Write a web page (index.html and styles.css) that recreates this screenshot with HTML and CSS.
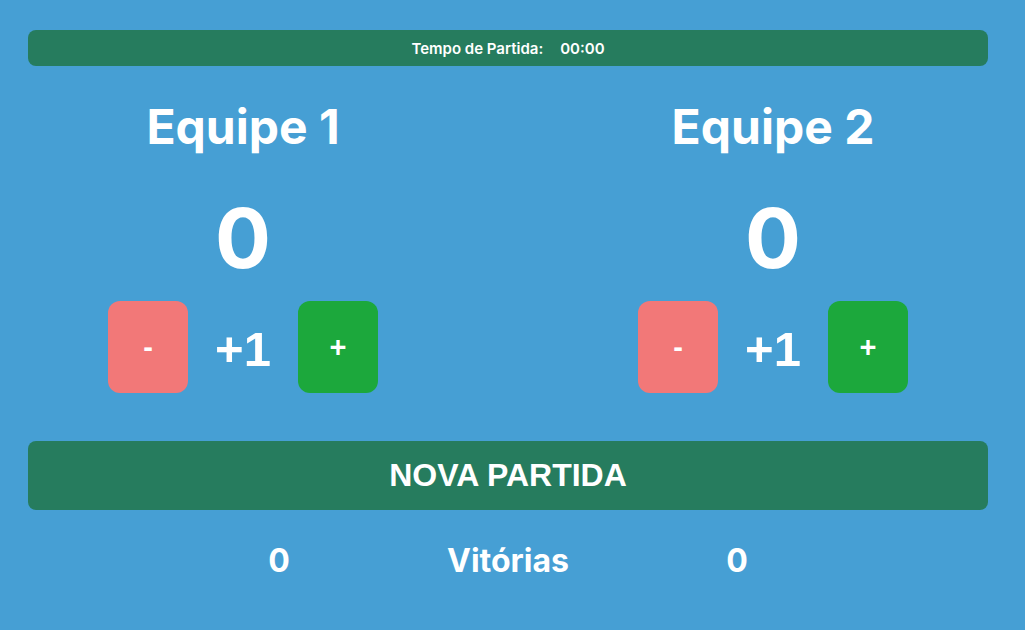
FILE: index.html
```html
<!DOCTYPE html>
<html lang="pt-BR">
<head>
<meta charset="utf-8">
<title>Placar</title>
<link rel="stylesheet" href="styles.css">
</head>
<body>
<main class="app">
  <div class="timer-bar">
    <span class="timer-label">Tempo de Partida:</span>
    <span class="timer-value">00:00</span>
  </div>
  <section class="teams">
    <div class="team">
      <h1 class="team-name">Equipe 1</h1>
      <div class="score">0</div>
      <div class="controls">
        <button class="btn btn-minus">-</button>
        <span class="step">+1</span>
        <button class="btn btn-plus">+</button>
      </div>
    </div>
    <div class="team">
      <h1 class="team-name">Equipe 2</h1>
      <div class="score">0</div>
      <div class="controls">
        <button class="btn btn-minus">-</button>
        <span class="step">+1</span>
        <button class="btn btn-plus">+</button>
      </div>
    </div>
  </section>
  <button class="new-match">NOVA PARTIDA</button>
  <div class="wins">
    <span class="wins-cell">0</span>
    <span class="wins-cell">Vitórias</span>
    <span class="wins-cell">0</span>
  </div>
</main>
</body>
</html>
```
FILE: styles.css
```css
* { box-sizing: border-box; }
html, body {
  margin: 0;
  padding: 0;
  background: #469fd4;
  height: 100%;
}
body {
  font-family: "Inter", "Liberation Sans", sans-serif;
  color: #ffffff;
}
.app {
  width: 960px;
  margin: 0 0 0 28px;
  padding-top: 30px;
  display: flex;
  flex-direction: column;
}
.timer-bar {
  height: 36px;
  background: #267c5e;
  border-radius: 8px;
  display: flex;
  align-items: center;
  justify-content: center;
  gap: 17px;
  font-size: 15px;
  font-weight: 600;
}
.teams {
  display: flex;
  justify-content: space-between;
  padding: 0 80px;
  margin-top: 32px;
}
.team {
  width: 270px;
  display: flex;
  flex-direction: column;
  align-items: center;
}
.team-name {
  margin: 0;
  font-size: 48px;
  line-height: 58px;
  font-weight: 700;
}
.score {
  margin-top: 40px;
  font-size: 83px;
  line-height: 84px;
  font-weight: 700;
}
.controls {
  margin-top: 21px;
  width: 100%;
  display: flex;
  align-items: center;
  justify-content: space-between;
}
.btn {
  width: 80px;
  height: 92px;
  border: none;
  border-radius: 12px;
  color: #ffffff;
  font-family: "Liberation Sans", Arial, sans-serif;
  font-size: 29px;
  font-weight: 700;
  padding: 0;
}
.btn-minus { background: #f27878; }
.btn-plus { background: #1ca83c; }
.step {
  font-family: "Liberation Sans", Arial, sans-serif;
  font-weight: 700;
  font-size: 49px;
  line-height: 1;
  padding-top: 4px;
}
.new-match {
  margin-top: 48px;
  height: 69px;
  border: none;
  border-radius: 8px;
  background: #267c5e;
  color: #ffffff;
  font-family: "Liberation Sans", Arial, sans-serif;
  font-weight: 700;
  font-size: 32px;
  padding: 0;
}
.wins {
  margin-top: 32px;
  display: flex;
  justify-content: center;
  font-size: 32px;
  line-height: 38px;
  font-weight: 700;
}
.wins-cell {
  width: 229px;
  text-align: center;
}
```
